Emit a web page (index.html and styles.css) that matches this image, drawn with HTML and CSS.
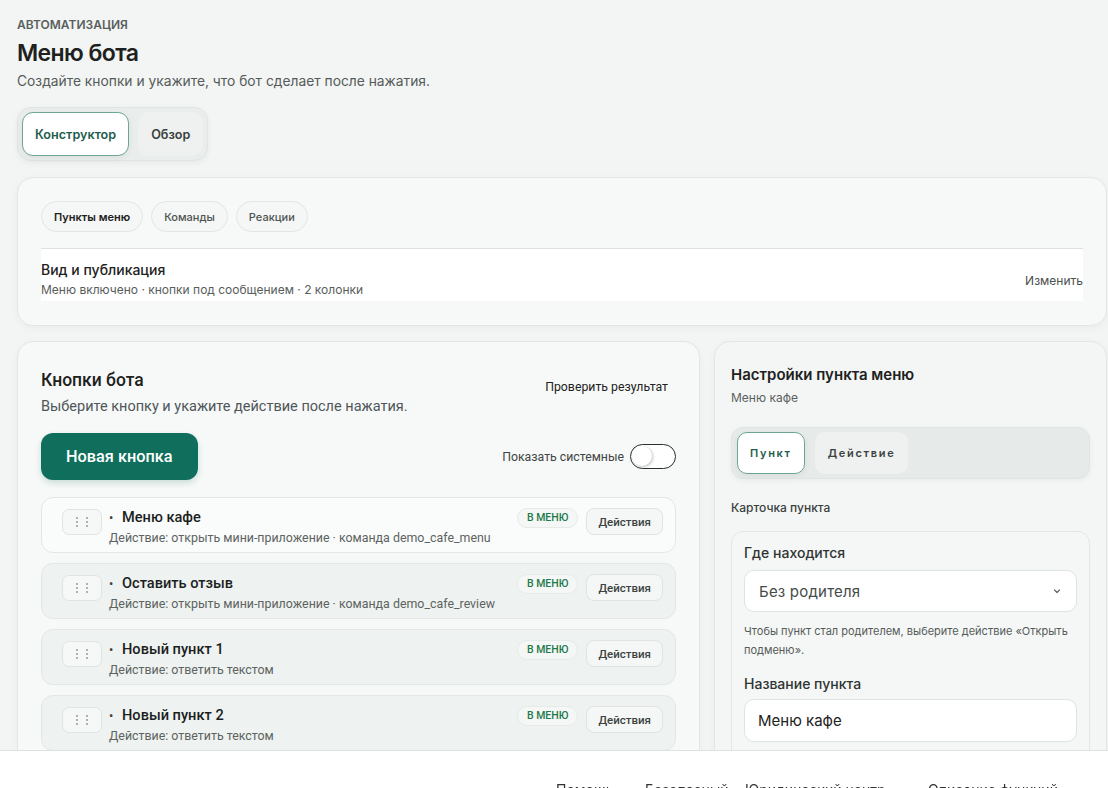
FILE: index.html
```html
<!DOCTYPE html>
<html lang="ru">
<head>
    <meta charset="UTF-8">
    <meta name="viewport" content="width=device-width, initial-scale=1.0">
    <title>Меню бота</title>
    <link rel="stylesheet" href="styles.css">
</head>
<body>
    <main class="page">
        <div class="eyebrow">Автоматизация</div>
        <h1 class="page-title">Меню бота</h1>
        <p class="page-sub">Создайте кнопки и укажите, что бот сделает после нажатия.</p>

        <div class="segmented">
            <button class="seg-btn active">Конструктор</button>
            <button class="seg-btn">Обзор</button>
        </div>

        <section class="card top-card">
            <div class="pills">
                <button class="pill active">Пункты меню</button>
                <button class="pill">Команды</button>
                <button class="pill">Реакции</button>
            </div>
            <div class="publish">
                <div>
                    <div class="publish-title">Вид и публикация</div>
                    <div class="publish-sub">Меню включено · кнопки под сообщением · 2 колонки</div>
                </div>
                <button class="link-btn">Изменить</button>
            </div>
        </section>

        <div class="workspace">
            <section class="card buttons-card">
                <div class="card-head">
                    <div>
                        <h2 class="card-title">Кнопки бота</h2>
                        <p class="card-sub">Выберите кнопку и укажите действие после нажатия.</p>
                    </div>
                    <button class="link-btn check-btn">Проверить результат</button>
                </div>
                <div class="toolbar">
                    <button class="primary-btn">Новая кнопка</button>
                    <label class="switch-label">
                        Показать системные
                        <span class="switch"><span class="knob"></span></span>
                    </label>
                </div>
                <ul class="items">
                    <li class="item selected">
                        <span class="handle"><svg width="14" height="12" viewBox="0 0 14 12"><g fill="#8b918f"><circle cx="2" cy="2" r="0.9"/><circle cx="2" cy="6" r="0.9"/><circle cx="2" cy="10" r="0.9"/><circle cx="12" cy="2" r="0.9"/><circle cx="12" cy="6" r="0.9"/><circle cx="12" cy="10" r="0.9"/></g></svg></span>
                        <div class="item-body">
                            <div class="item-title"><span class="dot">•</span>Меню кафе</div>
                            <div class="item-sub">Действие: открыть мини-приложение · команда demo_cafe_menu</div>
                        </div>
                        <span class="badge">В МЕНЮ</span>
                        <button class="small-btn">Действия</button>
                    </li>
                    <li class="item">
                        <span class="handle"><svg width="14" height="12" viewBox="0 0 14 12"><g fill="#8b918f"><circle cx="2" cy="2" r="0.9"/><circle cx="2" cy="6" r="0.9"/><circle cx="2" cy="10" r="0.9"/><circle cx="12" cy="2" r="0.9"/><circle cx="12" cy="6" r="0.9"/><circle cx="12" cy="10" r="0.9"/></g></svg></span>
                        <div class="item-body">
                            <div class="item-title"><span class="dot">•</span>Оставить отзыв</div>
                            <div class="item-sub">Действие: открыть мини-приложение · команда demo_cafe_review</div>
                        </div>
                        <span class="badge">В МЕНЮ</span>
                        <button class="small-btn">Действия</button>
                    </li>
                    <li class="item">
                        <span class="handle"><svg width="14" height="12" viewBox="0 0 14 12"><g fill="#8b918f"><circle cx="2" cy="2" r="0.9"/><circle cx="2" cy="6" r="0.9"/><circle cx="2" cy="10" r="0.9"/><circle cx="12" cy="2" r="0.9"/><circle cx="12" cy="6" r="0.9"/><circle cx="12" cy="10" r="0.9"/></g></svg></span>
                        <div class="item-body">
                            <div class="item-title"><span class="dot">•</span>Новый пункт 1</div>
                            <div class="item-sub">Действие: ответить текстом</div>
                        </div>
                        <span class="badge">В МЕНЮ</span>
                        <button class="small-btn">Действия</button>
                    </li>
                    <li class="item">
                        <span class="handle"><svg width="14" height="12" viewBox="0 0 14 12"><g fill="#8b918f"><circle cx="2" cy="2" r="0.9"/><circle cx="2" cy="6" r="0.9"/><circle cx="2" cy="10" r="0.9"/><circle cx="12" cy="2" r="0.9"/><circle cx="12" cy="6" r="0.9"/><circle cx="12" cy="10" r="0.9"/></g></svg></span>
                        <div class="item-body">
                            <div class="item-title"><span class="dot">•</span>Новый пункт 2</div>
                            <div class="item-sub">Действие: ответить текстом</div>
                        </div>
                        <span class="badge">В МЕНЮ</span>
                        <button class="small-btn">Действия</button>
                    </li>
                </ul>
            </section>

            <section class="card settings-card">
                <h2 class="settings-title">Настройки пункта меню</h2>
                <p class="settings-sub">Меню кафе</p>
                <div class="segmented wide">
                    <button class="seg-btn spaced active">Пункт</button>
                    <button class="seg-btn spaced">Действие</button>
                </div>
                <div class="group-label">Карточка пункта</div>
                <div class="field-card">
                    <label class="field-label">Где находится</label>
                    <div class="select">
                        <span>Без родителя</span>
                        <svg width="10" height="10" viewBox="0 0 10 10"><path d="M2.5 4l2.5 2.5L7.5 4" fill="none" stroke="#666" stroke-width="1.2" stroke-linecap="round" stroke-linejoin="round"/></svg>
                    </div>
                    <p class="hint">Чтобы пункт стал родителем, выберите действие «Открыть подменю».</p>
                    <label class="field-label">Название пункта</label>
                    <input class="input" type="text" value="Меню кафе">
                </div>
            </section>
        </div>
    </main>

    <nav class="bottom-bar">
        <a class="nav-help">Помощь</a>
        <a class="nav-safe">Безопасный</a>
        <a class="nav-legal">Юридический центр</a>
        <a>Описание функций</a>
    </nav>
</body>
</html>
```

FILE: styles.css
```css
* {
    box-sizing: border-box;
}
html, body {
    margin: 0;
    height: 100%;
    overflow: hidden;
}
body {
    background-color: #f3f5f4;
    font-family: Inter, "Noto Sans", sans-serif;
    color: #1d2120;
}
button, input {
    font-family: inherit;
}
.page {
    padding: 16px 1px 0 17px;
}
.eyebrow {
    font-size: 12px;
    font-weight: 600;
    text-transform: uppercase;
    color: #5a5f5d;
    line-height: 18px;
}
.page-title {
    margin: 3px 0 0;
    font-size: 23px;
    font-weight: 600;
    line-height: 32px;
    letter-spacing: -0.6px;
}
.page-sub {
    margin: 2px 0 0;
    font-size: 13.8px;
    color: #555b59;
    line-height: 20px;
}

/* segmented control */
.segmented {
    display: inline-flex;
    gap: 9px;
    margin-top: 16px;
    padding: 4px;
    background-color: #e9edeb;
    border: 1px solid #e0e5e2;
    border-radius: 14px;
    box-shadow: 0 2px 6px rgba(0, 0, 0, 0.05);
}
.seg-btn {
    height: 44px;
    padding: 0 12px;
    border: 1px solid transparent;
    border-radius: 11px;
    background-color: #eef1ef;
    font-size: 12.6px;
    font-weight: 600;
    color: #3b4140;
    cursor: pointer;
}
.seg-btn.active {
    background-color: #fff;
    border-color: #6ea695;
    color: #1e5d4d;
    box-shadow: 0 2px 6px rgba(0, 0, 0, 0.06);
}

/* cards */
.card {
    background-color: #f7f9f8;
    border: 1px solid #e2e6e4;
    border-radius: 16px;
    box-shadow: 0 2px 8px rgba(0, 0, 0, 0.04);
}
.top-card {
    margin-top: 16px;
    padding: 23px 23px 24px;
}
.pills {
    display: flex;
    gap: 8px;
}
.pill {
    height: 31px;
    padding: 0 12px;
    border: 1px solid #e1e5e3;
    border-radius: 16px;
    background-color: #f5f7f6;
    font-size: 11px;
    font-weight: 500;
    color: #4d5351;
}
.pill.active {
    font-weight: 600;
    color: #1d2120;
}
.publish {
    display: flex;
    justify-content: space-between;
    align-items: center;
    margin-top: 16px;
    padding: 12px 0 2px;
    border-top: 1px solid #dde1df;
    background-color: #fff;
}
.publish-title {
    font-size: 14px;
    font-weight: 500;
    line-height: 18px;
}
.publish-sub {
    margin-top: 2px;
    font-size: 12px;
    color: #575d5b;
    line-height: 18px;
}
.link-btn {
    border: none;
    background: none;
    padding: 0;
    font-size: 12px;
    color: #4a504e;
    cursor: pointer;
}

/* workspace */
.workspace {
    display: grid;
    grid-template-columns: 683px 1fr;
    gap: 14px;
    margin-top: 15px;
}
.buttons-card {
    padding: 26px 23px 20px;
    font-family: Roboto, "Noto Sans", sans-serif;
    border-bottom-left-radius: 0;
    border-bottom-right-radius: 0;
}
.card-head {
    display: flex;
    justify-content: space-between;
    align-items: flex-start;
}
.card-title {
    margin: 0;
    font-size: 17.5px;
    font-weight: 500;
    line-height: 24px;
}
.card-sub {
    margin: 5px 0 0;
    font-size: 14.5px;
    color: #50565a;
    line-height: 20px;
}
.check-btn {
    margin: 12px 8px 0 0;
    font-size: 12.3px;
    color: #222;
}
.toolbar {
    display: flex;
    justify-content: space-between;
    align-items: center;
    margin-top: 16px;
}
.primary-btn {
    height: 47px;
    padding: 0 25px;
    border: none;
    border-radius: 12px;
    background-color: #0f6f5c;
    color: #fff;
    font-family: inherit;
    font-size: 16.3px;
    font-weight: 500;
    box-shadow: 0 3px 6px rgba(15, 111, 92, 0.2);
}
.switch-label {
    display: flex;
    align-items: center;
    gap: 6px;
    font-size: 12.3px;
    color: #3f4543;
}
.switch {
    display: inline-block;
    width: 46px;
    height: 25px;
    padding: 1px;
    border: 1.5px solid #2a2e2d;
    border-radius: 13px;
    background-color: #fff;
}
.knob {
    display: block;
    width: 20px;
    height: 20px;
    border-radius: 50%;
    background-color: #fff;
    box-shadow: 1px 1px 3px rgba(0, 0, 0, 0.25);
}
.items {
    list-style: none;
    margin: 17px 0 0;
    padding: 0;
    display: flex;
    flex-direction: column;
    gap: 10px;
}
.item {
    display: flex;
    align-items: flex-start;
    height: 56px;
    padding: 10px 12px 0 20px;
    border: 1px solid #e2e7e5;
    border-radius: 12px;
    background-color: #eef2f0;
}
.item.selected {
    background-color: #fafbfb;
}
.handle {
    flex: none;
    display: flex;
    align-items: center;
    justify-content: center;
    width: 40px;
    height: 26px;
    margin-top: 1px;
    border: 1px solid #e0e4e2;
    border-radius: 7px;
    background-color: #f6f8f7;
}
.item-body {
    flex: 1;
    margin-left: 7px;
}
.item-title {
    font-size: 14.6px;
    font-weight: 500;
    line-height: 18px;
    color: #1b1f1e;
}
.dot {
    display: inline-block;
    width: 13px;
    font-size: 12px;
    color: #444;
}
.item-sub {
    margin-top: 3px;
    font-size: 12.4px;
    color: #5d6361;
    line-height: 16px;
}
.badge {
    flex: none;
    height: 20px;
    padding: 0 9px;
    border: 1px solid #e6ebe8;
    border-radius: 10px;
    background-color: #f4f7f5;
    font-size: 10.5px;
    font-weight: 500;
    color: #1f7a4b;
    line-height: 18px;
}
.small-btn {
    flex: none;
    height: 27px;
    margin-left: 8px;
    padding: 0 11px;
    border: 1px solid #dfe3e1;
    border-radius: 8px;
    background-color: #f5f7f6;
    font-size: 11.5px;
    font-weight: 500;
    color: #3d4341;
}

/* settings */
.settings-card {
    padding: 23px 16px 16px;
    background-color: #f3f6f5;
    border-bottom-left-radius: 0;
    border-bottom-right-radius: 0;
}
.settings-title {
    margin: 0;
    font-size: 15px;
    font-weight: 600;
    line-height: 20px;
}
.settings-sub {
    margin: 4px 0 0;
    font-size: 12px;
    color: #5b615f;
    line-height: 18px;
}
.segmented.wide {
    display: flex;
    gap: 10px;
    margin-top: 20px;
    padding: 4px 5px;
    border-radius: 12px;
    background-color: #e6ebe9;
    box-shadow: 0 2px 6px rgba(0, 0, 0, 0.04);
}
.seg-btn.spaced {
    height: 42px;
    padding: 0 12px;
    font-size: 11px;
    letter-spacing: 1.7px;
    border-radius: 10px;
}
.group-label {
    margin-top: 20px;
    font-size: 12px;
    font-weight: 500;
    color: #3a403e;
    line-height: 18px;
}
.field-card {
    margin-top: 14px;
    padding: 12px 12px 20px;
    border: 1px solid #e2e6e4;
    border-radius: 12px;
    background-color: #f5f7f6;
}
.field-label {
    display: block;
    font-size: 14px;
    font-weight: 500;
    color: #2e3432;
    line-height: 18px;
}
.select {
    display: flex;
    justify-content: space-between;
    align-items: center;
    height: 42px;
    margin-top: 8px;
    padding: 0 14px;
    border: 1px solid #dfe3e1;
    border-radius: 10px;
    background-color: #fff;
    font-size: 15px;
    color: #454b49;
    letter-spacing: 0.2px;
}
.hint {
    margin: 10px 0 15px;
    font-size: 11px;
    color: #555b59;
    line-height: 19px;
}
.input {
    display: block;
    width: 100%;
    height: 43px;
    margin-top: 6px;
    padding: 0 13px;
    border: 1px solid #dfe3e1;
    border-radius: 10px;
    background-color: #fff;
    font-size: 15px;
    color: #222;
}

/* bottom bar */
.bottom-bar {
    position: fixed;
    left: 0;
    right: 0;
    bottom: 0;
    height: 38px;
    display: flex;
    padding: 30px 0 0 556px;
    background-color: #fff;
    border-top: 1px solid #dde2df;
    font-size: 14px;
    line-height: 17px;
    color: #333;
}
.bottom-bar a {
    white-space: nowrap;
}
.nav-help {
    width: 89px;
}
.nav-safe {
    width: 100px;
}
.nav-legal {
    width: 183px;
}
```
